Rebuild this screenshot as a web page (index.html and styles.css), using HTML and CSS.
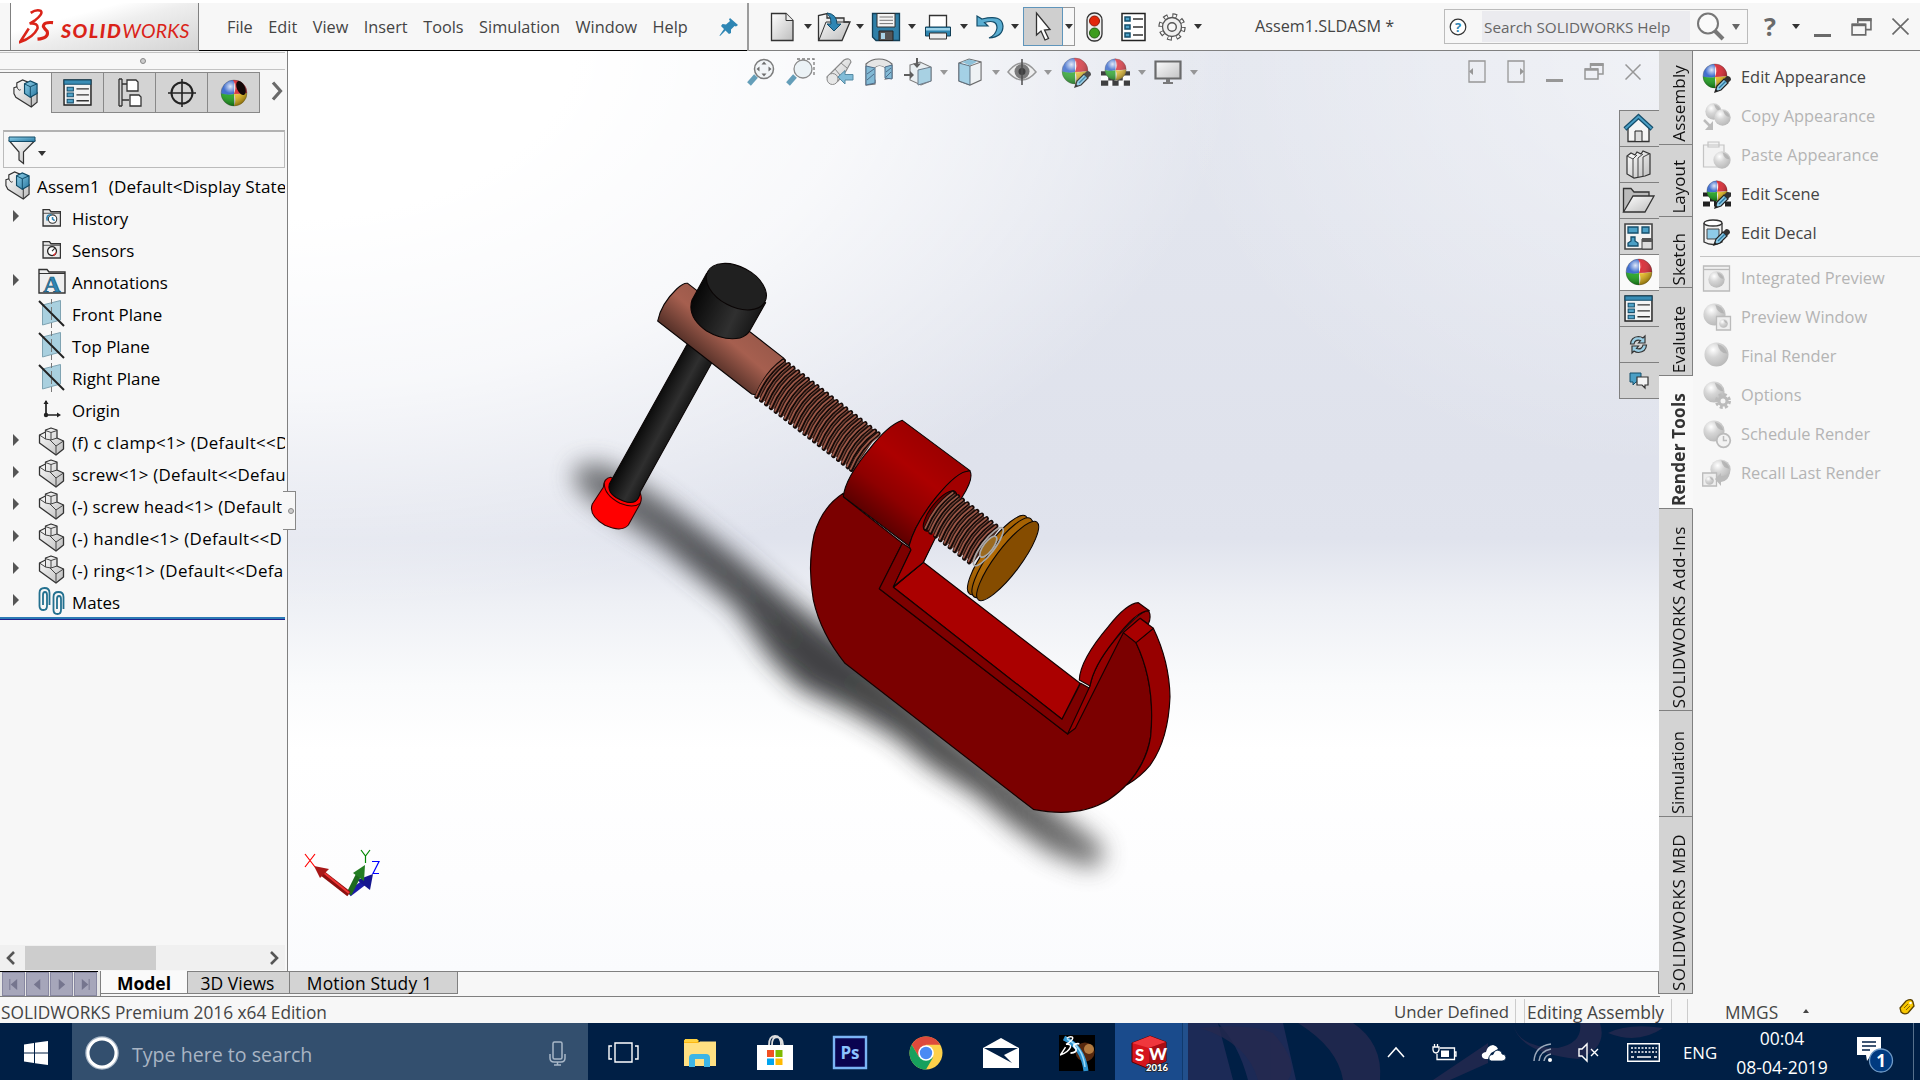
FILE: index.html
```html
<!DOCTYPE html>
<html lang="en">
<head>
<meta charset="utf-8">
<title>Assem1.SLDASM - SOLIDWORKS</title>
<link rel="stylesheet" href="styles.css">
</head>
<body>
<svg class="defs" width="0" height="0" aria-hidden="true">
  <defs>
    <linearGradient id="gBlue" x1="0" y1="0" x2="1" y2="1"><stop offset="0" stop-color="#8fd0ea"/><stop offset="1" stop-color="#2a7aa2"/></linearGradient>
    <linearGradient id="gGrey" x1="0" y1="0" x2="1" y2="1"><stop offset="0" stop-color="#fff"/><stop offset="1" stop-color="#bdbdbd"/></linearGradient>
    <radialGradient id="gShine" cx=".36" cy=".25" r=".75"><stop offset="0" stop-color="#fff" stop-opacity=".85"/><stop offset=".35" stop-color="#fff" stop-opacity=".1"/><stop offset="1" stop-color="#000" stop-opacity=".38"/></radialGradient>
    <radialGradient id="gBall" cx=".36" cy=".3" r=".8"><stop offset="0" stop-color="#fff"/><stop offset=".4" stop-color="#d6d6d6"/><stop offset="1" stop-color="#b4b4b4"/></radialGradient>
    <symbol id="sphere" viewBox="0 0 28 28">
      <path d="M14 14V1A13 13 0 0 0 1.2 15Q8 17 14 15Z" fill="#2c5fc9"/>
      <path d="M13 1A13 13 0 0 1 27 14Q20 15 14 15Q17 8 13 1Z" fill="#d8202a"/>
      <path d="M1 14.5Q8 16.500 14 15V27A13 13 0 0 1 1 14.500Z" fill="#17a317"/>
      <path d="M14 15Q21 15.500 27 14A13 13 0 0 1 14 27Q17 21 14 15Z" fill="#f1c21b"/>
      <circle cx="14" cy="14" r="13" fill="url(#gShine)" stroke="#333" stroke-opacity=".5" stroke-width=".6"/>
    </symbol>
    <symbol id="pencil" viewBox="0 0 18 18">
      <path d="M1 17L3 11L10 4L14 8L7 15Z" fill="#8ecbe8" stroke="#222" stroke-width="1.200"/>
      <path d="M5 13L12 6" stroke="#2a7aa2" stroke-width="1.500"/>
      <path d="M10 4L13 1Q17 1 17 5L14 8Z" fill="#333"/><path d="M1 17l1-3 2 2z" fill="#222"/>
    </symbol>
    <symbol id="checker" viewBox="0 0 28 14">
      <path d="M0 0H28V14H0Z" fill="#fff"/><path d="M0 0H7V4H0ZM21 0H28V4H21ZM7 4H13V9H7ZM16 4H21V9H16ZM0 9H7V14H0ZM11 9H17V14H11ZM22 9H28V14H22Z" fill="#222"/>
    </symbol>
    <symbol id="asm" viewBox="0 0 28 30">
      <path d="M2 9L5 8V4L11 1L16 3L15 7L26 14V24L20 29L4 19L2 15Z" fill="url(#gGrey)" stroke="#333" stroke-width="1.200"/>
      <path d="M20 29V18L26 14M5 8Q7 13 9 11" fill="none" stroke="#333"/>
      <path d="M13 5L19 2L26 5V15L19 19L13 15Z" fill="url(#gBlue)" stroke="#0f4a66" stroke-width="1.200"/><path d="M13 5L19 8L26 5M19 8V19" fill="none" stroke="#0f4a66"/>
    </symbol>
    <symbol id="part" viewBox="0 0 27 29">
      <path d="M1.500 8L7.500 5V3L13 1L19 3V11L25.500 14V22L18 28L1.500 16Z" fill="url(#gGrey)" stroke="#333" stroke-width="1.300" stroke-linejoin="round"/>
      <path d="M7.500 3.500L13 5.500L19 3.500M13 5.500V13L7.500 12V4M1.500 8L7.500 12M13 13L19 11M12 13L18 19L25.500 14M18 19V28" fill="none" stroke="#444"/>
    </symbol>
    <symbol id="plane" viewBox="0 0 27 29">
      <path d="M4.500 6L22.500 1.500V21L4.500 26Z" fill="#a9d0df" stroke="#7fa3b2"/>
      <path d="M13.500 0V29" stroke="#777" stroke-dasharray="5 3"/><path d="M1 2L26 27" stroke="#222" stroke-width="2"/>
    </symbol>
    <symbol id="folder" viewBox="0 0 18 18">
      <path d="M1 4V1.500H7L8.500 3.500H17.500V17H1Z" fill="#e9e9e9" stroke="#333" stroke-width="1.300"/><path d="M1 5H17" stroke="#333" stroke-width=".8"/>
    </symbol>
    <symbol id="list" viewBox="0 0 28 26">
      <path d="M1 1H27V25H1Z" fill="#f4f4f4" stroke="#222" stroke-width="1.400"/><path d="M1 1H27V5H1Z" fill="#3a8db5" stroke="#154e6b"/>
      <path d="M4 8h6v3.500H4zM4 13.500h6V17H4zM4 19.500h6V23H4z" fill="#4fa3c9" stroke="#154e6b"/><path d="M13 9.500H25M13 15.300H25M13 21H25" stroke="#333" stroke-width="1.300"/>
    </symbol>
    <symbol id="restore" viewBox="0 0 20 17"><path d="M6.500 5V1H19V11H14" fill="none" stroke="currentColor" stroke-width="1.500"/><path d="M6 1.500H19.500" stroke="currentColor" stroke-width="3"/><path d="M1 6H14V16H1Z" fill="none" stroke="currentColor" stroke-width="1.500"/><path d="M1 6.500H14" stroke="currentColor" stroke-width="2.500"/></symbol>
    <symbol id="close" viewBox="0 0 16 16"><path d="M.5.500L15.500 15.500M15.500.500L.5 15.500" stroke="currentColor" stroke-width="1.500"/></symbol>
    <symbol id="ball" viewBox="0 0 26 26"><circle cx="13" cy="13" r="12.500" fill="url(#gBall)"/><path d="M14 2Q22 4 24 12Q16 12 14 2Z" fill="#a9a9a9" opacity=".7"/></symbol>
    <symbol id="ds" viewBox="0 0 38 36">
      <path d="M12 4Q18 0 22.500 2Q25 5 16 12L11 15Q20 14 19 20Q15 29 1 34L10 20" fill="none" stroke="currentColor" stroke-width="2.600"/>
      <path d="M35 14Q25 13 25 18Q26 20 29 23Q31 30 19 31" fill="none" stroke="currentColor" stroke-width="3.200"/>
    </symbol>
  </defs>
</svg>

<header class="titlebar">
  <div class="menubar">
    <div class="brand">
      <svg class="brand-mark" viewBox="0 0 38 36"><use href="#ds"/></svg>
      <span class="brand-bold">SOLID</span><span class="brand-light">WORKS</span>
    </div>
    <nav class="menus">
      <span>File</span><span>Edit</span><span>View</span><span>Insert</span><span>Tools</span><span>Simulation</span><span>Window</span><span>Help</span>
    </nav>
    <svg class="pin" viewBox="0 0 20 20"><path d="M11 1L19 8L17 9.500L15.500 9L12 12.500L12 16L10 17L6.500 13.500L1 19L.5 18.500L5 12L2 9L3.500 7L7 7.500L11 4L10 2.500Z" fill="#2e86b4"/></svg>
  </div>
  <div class="tools">
    <svg class="ico" viewBox="0 0 30 30"><path d="M4.500 1.500H19L26 8.500V28.500H4.500Z" fill="url(#gGrey)" stroke="#333" stroke-width="1.300"/><path d="M19 1.500V8.500H26" fill="#eee" stroke="#333"/></svg>
    <i class="caret"></i>
    <svg class="ico wide" viewBox="0 0 34 30"><path d="M1.500 28.500V3.500L10 1.500V6H27V10H33L25 28.500Z" fill="url(#gGrey)" stroke="#333" stroke-width="1.300"/><path d="M2 28L9 10H32" fill="none" stroke="#333"/><path d="M10 1Q20 2 20 12H24L17 19L10 12H14Q15 6 10 1Z" fill="#2e86b4" stroke="#134c69"/></svg>
    <i class="caret"></i>
    <svg class="ico" viewBox="0 0 30 30"><path d="M1.500 1.500H28.500V28.500H5L1.500 25Z" fill="#2f7fa7" stroke="#123f57" stroke-width="1.300"/><path d="M6 1.500H24V15H6Z" fill="#f3f3f3" stroke="#333"/><path d="M8.500 5H22M8.500 8.300H22M8.500 11.600H22" stroke="#777"/><path d="M8 19H22V28.500H8Z" fill="#555" stroke="#222"/><path d="M10 21H14V27H10Z" fill="#aad3e6"/></svg>
    <i class="caret"></i>
    <svg class="ico" viewBox="0 0 30 30"><path d="M6.500 3.500H23.500V16H6.500Z" fill="#fff" stroke="#333" stroke-width="1.300"/><path d="M2.500 15H27.500V24H2.500Z" fill="#2f86b0" stroke="#123f57"/><path d="M3 16H27V18.500H3Z" fill="#9dd3ea"/><path d="M6.500 21H23.500V27H6.500Z" fill="#eee" stroke="#333"/></svg>
    <i class="caret"></i>
    <svg class="ico" viewBox="0 0 30 30"><path d="M2 4V14H13L9.500 10.500Q22 7 22 16Q21 23 14 26Q28 25 28 14Q27 2 7 7Z" fill="#5aaed2" stroke="#134c69" stroke-width="1.200"/></svg>
    <i class="caret last"></i>
    <div class="select-tool"><svg width="16" height="30" viewBox="0 0 16 30"><path d="M1.500 1V23L6 19L10 28L13.500 26.500L9.500 18L15 17.500Z" fill="#fff" stroke="#333" stroke-width="1.300"/></svg></div>
    <div class="select-drop"><i class="caret"></i></div>
    <svg class="traffic" viewBox="0 0 17 30"><rect x="1" y="1" width="15" height="28" rx="7" fill="#eee" stroke="#333" stroke-width="1.300"/><circle cx="8.500" cy="9" r="5" fill="#e32709" stroke="#8c1a08"/><circle cx="8.500" cy="21" r="5" fill="#3c9c1d" stroke="#235d11"/></svg>
    <svg class="optlist" viewBox="0 0 25 30"><path d="M1 1.500H24V28.500H1Z" fill="#fff" stroke="#222" stroke-width="1.500"/><path d="M4 5h5v4H4zM4 13h5v4H4zM4 21h5v4H4z" fill="#4fa3c9" stroke="#154e6b" stroke-width="1.500"/><path d="M12 7H22M12 15H22M12 23H22" stroke="#333" stroke-width="1.400"/></svg>
    <svg class="gear" viewBox="0 0 30 30"><circle cx="15" cy="15" r="11.700" fill="none" stroke="#555" stroke-width="4" stroke-dasharray="4.600 4.590"/><circle cx="15" cy="15" r="11.200" fill="none" stroke="#fafafa" stroke-width="2.600" stroke-dasharray="2.600 6.200" stroke-dashoffset="-1"/><circle cx="15" cy="15" r="9.500" fill="#f0f0f0" stroke="#555" stroke-width="1.300"/><circle cx="15" cy="15" r="4.300" fill="#f7f7f7" stroke="#555" stroke-width="1.400"/></svg>
    <i class="caret"></i>
  </div>
  <div class="doc-title">Assem1.SLDASM *</div>
  <div class="search">
    <svg width="18" height="18" viewBox="0 0 18 18"><circle cx="9" cy="9" r="7.800" fill="#fff" stroke="#333" stroke-width="1.200"/><text x="9" y="13.500" text-anchor="middle" class="help-q">?</text></svg>
    <span class="search-field">Search SOLIDWORKS Help</span>
    <svg width="29" height="29" viewBox="0 0 29 29"><circle cx="12" cy="11.500" r="10" fill="#fafafa" stroke="#777" stroke-width="2"/><path d="M18.500 18.500L27 27" stroke="#777" stroke-width="4"/></svg>
    <i class="caret big"></i>
  </div>
  <div class="win-ctl">
    <b>?</b><i class="caret"></i><span class="min"></span>
    <svg width="21" height="18"><use href="#restore"/></svg><svg width="17" height="17"><use href="#close"/></svg>
  </div>
</header>

<main class="work">
  <div class="left">
    <div class="stage">
      <aside class="panel">
        <div class="grip"><i></i></div>
        <div class="ptabs">
          <div class="ptab on"><svg width="27" height="29"><use href="#asm"/></svg></div>
          <div class="ptab"><svg width="29" height="27"><use href="#list"/></svg></div>
          <div class="ptab"><svg width="25" height="29" viewBox="0 0 25 29"><path d="M2 1V28M5 1V28M2 1H5M2 28H5M5 6H10M5 22H12" fill="none" stroke="#333" stroke-width="1.300"/><path d="M10 2H19L21 4V13H10ZM13 17H22L24 19V28H13Z" fill="#fff" stroke="#333" stroke-width="1.300"/></svg></div>
          <div class="ptab"><svg width="28" height="28" viewBox="0 0 28 28"><circle cx="14" cy="14" r="10.500" fill="none" stroke="#222" stroke-width="2"/><path d="M14 0V28M0 14H28" stroke="#222" stroke-width="1.600"/></svg></div>
          <div class="ptab"><svg width="28" height="28" viewBox="0 0 28 28"><use href="#sphere"/><ellipse cx="21" cy="9" rx="4" ry="7.500" transform="rotate(-25 21 9)" fill="#120808"/></svg></div>
          <svg class="more" width="12" height="20" viewBox="0 0 12 20"><path d="M2 1.500L9.500 10L2 18.500" fill="none" stroke="#6a6a6a" stroke-width="3.200"/></svg>
        </div>
        <div class="filter"><svg width="28" height="28" viewBox="0 0 28 28"><path d="M1.500 5L11 16V24L15.500 27.500V16L26.500 5Z" fill="url(#gGrey)" stroke="#333" stroke-width="1.200"/><path d="M1 1H27V5.500H1Z" fill="url(#gBlue)" stroke="#134c69"/></svg><i class="caret"></i></div>
        <ul class="tree">
          <li class="root"><svg width="27" height="29"><use href="#asm"/></svg>Assem1&nbsp; (Default&lt;Display State</li>
          <li class="exp"><span class="ti"><svg width="19" height="19" viewBox="0 0 18 18"><use href="#folder"/><circle cx="10" cy="10.500" r="4" fill="#fff" stroke="#333"/><path d="M5 12Q3.500 6 9 6.500M10 8.500V10.500L12 12" fill="none" stroke="#2e86b4" stroke-width="1.500"/></svg></span>History</li>
          <li><span class="ti"><svg width="19" height="19" viewBox="0 0 18 18"><use href="#folder"/><circle cx="9.500" cy="10.500" r="4.200" fill="#fff" stroke="#222" stroke-width="1.200"/><path d="M9.500 10.500L12 8" stroke="#222"/><path d="M10 14.500L14 11L12 15Z" fill="#e33"/></svg></span>Sensors</li>
          <li class="exp"><span class="ti"><svg width="28" height="26" viewBox="0 0 28 26"><path d="M1 5V1.500H9L11 4H27V25H1Z" fill="#efefef" stroke="#333" stroke-width="1.400"/><path d="M1 5.500H27" stroke="#333"/><text x="14" y="24" text-anchor="middle" class="anno">A</text></svg></span>Annotations</li>
          <li><span class="ti"><svg width="27" height="29"><use href="#plane"/></svg></span>Front Plane</li>
          <li><span class="ti"><svg width="27" height="29"><use href="#plane"/></svg></span>Top Plane</li>
          <li><span class="ti"><svg width="27" height="29"><use href="#plane"/></svg></span>Right Plane</li>
          <li><span class="ti"><svg width="18" height="18" viewBox="0 0 18 18"><path d="M3 1V15H16" fill="none" stroke="#222" stroke-width="1.700"/><path d="M3 0L5.500 4H.5ZM18 15L14 12.500V17.500Z" fill="#222"/><circle cx="3" cy="15" r="2.200" fill="#222"/></svg></span>Origin</li>
          <li class="exp loose"><span class="ti"><svg width="27" height="29"><use href="#part"/></svg></span>(f) c clamp&lt;1&gt; (Default&lt;&lt;D</li>
          <li class="exp snug"><span class="ti"><svg width="27" height="29"><use href="#part"/></svg></span>screw&lt;1&gt; (Default&lt;&lt;Defau</li>
          <li class="exp tight"><span class="ti"><svg width="27" height="29"><use href="#part"/></svg></span>(-) screw head&lt;1&gt; (Default</li>
          <li class="exp loose"><span class="ti"><svg width="27" height="29"><use href="#part"/></svg></span>(-) handle&lt;1&gt; (Default&lt;&lt;D</li>
          <li class="exp loose"><span class="ti"><svg width="27" height="29"><use href="#part"/></svg></span>(-) ring&lt;1&gt; (Default&lt;&lt;Defa</li>
          <li class="exp"><span class="ti"><svg width="27" height="28" viewBox="0 0 27 28"><g fill="none" stroke="#23708f" stroke-width="1.800"><path d="M9 8V19Q9 23 5.500 23Q1.500 23 1.500 19V6Q1.500 1 6.500 1Q11.500 1 11.500 6V18M5 18V8Q5 5 7 5Q9 5 9 8"/><path d="M23 12V23Q23 27 19.500 27Q15.500 27 15.500 23V10Q15.500 5 20.500 5Q25.500 5 25.500 10V22M19 22V12Q19 9 21 9Q23 9 23 12"/></g></svg></span>Mates</li>
        </ul>
        <div class="rollback"></div>
        <div class="hscroll"><svg width="10" height="14" viewBox="0 0 10 14"><path d="M8 1L2 7L8 13" fill="none" stroke="#555" stroke-width="2.600"/></svg><div class="thumb"></div><svg class="r" width="10" height="14" viewBox="0 0 10 14"><path d="M2 1L8 7L2 13" fill="none" stroke="#555" stroke-width="2.600"/></svg></div>
      </aside>
      <section class="viewport">
        <svg class="model" viewBox="288 51 1371 920" width="1371" height="920">
          <defs>
            <filter id="soft" x="-20%" y="-20%" width="140%" height="140%"><feGaussianBlur stdDeviation="12"/></filter>
            <linearGradient id="mShade" gradientUnits="userSpaceOnUse" x1="580" y1="480" x2="1100" y2="870"><stop offset="0" stop-color="#66686b"/><stop offset=".2" stop-color="#444548"/><stop offset=".45" stop-color="#2c2d2f"/><stop offset=".8" stop-color="#3c3c3c"/><stop offset="1" stop-color="#6a6a6a"/></linearGradient>
            <linearGradient id="mRod" gradientUnits="userSpaceOnUse" x1="265" y1="500" x2="350" y2="545"><stop offset="0" stop-color="#050505"/><stop offset=".7" stop-color="#2f2f2f"/><stop offset="1" stop-color="#1c1c1c"/></linearGradient>
            <linearGradient id="mKnob" gradientUnits="userSpaceOnUse" x1="400" y1="170" x2="590" y2="255"><stop offset="0" stop-color="#060606"/><stop offset=".65" stop-color="#303030"/><stop offset="1" stop-color="#151515"/></linearGradient>
            <linearGradient id="mPink" gradientUnits="userSpaceOnUse" x1="530" y1="245" x2="437" y2="355"><stop offset="0" stop-color="#9c5a4b"/><stop offset=".4" stop-color="#a65f4f"/><stop offset="1" stop-color="#5b342b"/></linearGradient>
            <linearGradient id="mRed" gradientUnits="userSpaceOnUse" x1="1130" y1="615" x2="950" y2="845"><stop offset="0" stop-color="#9c0000"/><stop offset=".35" stop-color="#ac0000"/><stop offset=".7" stop-color="#8e0000"/><stop offset="1" stop-color="#5c0000"/></linearGradient>
            <linearGradient id="mGold" gradientUnits="userSpaceOnUse" x1="1400" y1="830" x2="1240" y2="1060"><stop offset="0" stop-color="#9a5a00"/><stop offset=".5" stop-color="#b46c06"/><stop offset="1" stop-color="#7a4700"/></linearGradient>
            <g id="turn"><path d="M590 470Q618 400 671 362" stroke="#150a08" stroke-width="14" stroke-linecap="round" fill="none"/><path d="M588 468Q616 400 670 362" stroke="#9a5747" stroke-width="5.400" stroke-linecap="round" fill="none"/><path d="M596 474Q624 405 676 367" stroke="#834a3c" stroke-width="3" fill="none"/></g>
            <g id="turn2"><use href="#turn"/><use href="#turn" x="14.400" y="11.100"/></g>
            <g id="turn4"><use href="#turn2"/><use href="#turn2" x="28.800" y="22.200"/></g>
            <g id="turn8"><use href="#turn4"/><use href="#turn4" x="57.600" y="44.400"/></g>
          </defs>
          <path filter="url(#soft)" opacity=".9" fill="url(#mShade)" d="M574 470Q588 456 618 470L670 505L740 559L800 608L870 660L960 740L1098 842Q1112 862 1090 868L1050 853L1010 824L978 796L930 766L895 737L850 711L800 688L772 660L735 607L660 545L600 506Q570 488 574 470Z"/>
          <g transform="translate(780 400) scale(.33333)" stroke="#180000" stroke-width="3.500" stroke-linejoin="round">
            <path fill="#aa0000" d="M340 562L430 487L900 850L846 958Z"/>
            <path fill="#930000" d="M394 447L388 400L470 400L430 487L340 562Z"/>
            <path fill="#7b0000" d="M190 280Q125 322 102 405Q82 500 100 600Q122 700 195 790L760 1228Q895 1255 985 1200Q1090 1130 1112 1010Q1127 850 1068 728L1030 698L930 865L863 1002L298 566L367 430L192 292Z"/>
            <path fill="#7d0000" d="M298 566L367 430L394 447L340 562L846 958L902 850L932 866L863 1002Z"/>
            <path fill="#970000" d="M1068 728L1120 685Q1168 785 1170 890Q1165 1020 1110 1096Q1082 1130 1040 1155Q1100 1090 1112 1010Q1127 850 1068 728Z"/>
            <path fill="#940000" d="M930 858Q940 800 1000 725Q1080 630 1106 632Q1115 650 1105 672L1080 655L1030 698L886 985L863 1002Z"/>
            <path fill="#a30000" d="M1075 608Q1040 610 985 680Q900 780 898 840L930 858Q940 800 1000 725Q1070 630 1108 632Z"/>
            <path fill="#a80000" d="M1030 698L1080 655L1120 685L1068 728Z"/>
          </g>
          <g transform="translate(560 240) scale(.33333)" stroke="#0a0505" stroke-width="3.200" stroke-linejoin="round">
            <path fill="#f00" stroke="#300" d="M152 712Q132 714 130 742L97 792Q84 825 135 856Q185 878 205 855L240 792Q248 775 240 758Z"/>
            <path fill="none" stroke="#300" d="M133 730Q132 765 180 790Q220 806 240 790"/>
            <path fill="url(#mRod)" d="M383 310L460 360L241 755Q235 800 190 783Q140 765 148 732Z"/>
            <path fill="url(#mPink)" d="M383 130L672 355Q640 375 600 467L575 462L293 243Q303 192 350 147Q370 128 383 130Z"/>
            <path fill="#452820" stroke="none" d="M592 466Q620 400 672 362L955 580L880 690Z"/>
            <g><use href="#turn8"/><use href="#turn8" x="115.200" y="88.800"/><use href="#turn4" x="230.400" y="177.600"/><use href="#turn" x="284" y="219"/></g>
            <path fill="url(#mKnob)" d="M440 100L396 180Q380 230 440 273Q490 303 540 294Q562 288 572 268L617 188Z"/>
            <ellipse cx="529" cy="140" rx="97" ry="60" transform="rotate(28 529 140)" fill="#202020"/>
            <path fill="url(#mRed)" d="M1027 541Q985 555 930 625Q855 715 850 770L1047 918Q1065 850 1130 770Q1190 697 1230 692Z"/>
            <path fill="#a20000" d="M1047 918Q1065 850 1130 770Q1195 690 1230 693Q1242 715 1207 770L1128 890L1090 967L1000 1040L1053 930Z"/>
            <ellipse cx="1140" cy="813" rx="74" ry="27" transform="rotate(-52 1140 813)" fill="#600"/>
            <path fill="#452820" stroke="none" d="M1100 862Q1128 796 1180 758L1318 866L1240 968Z"/>
            <g transform="translate(508 396)"><use href="#turn8"/><use href="#turn2" x="115" y="88.800"/></g>
            <g fill="url(#mGold)"><ellipse cx="1313" cy="945" rx="144" ry="40" transform="rotate(-54 1313 945)"/><ellipse cx="1327" cy="953" rx="145" ry="40" transform="rotate(-54 1327 953)"/></g>
            <ellipse cx="1343" cy="963" rx="146" ry="38" transform="rotate(-53 1343 963)" fill="#854c00"/>
            <g fill="none" stroke="#a9a9a9" stroke-width="5"><ellipse cx="1285" cy="920" rx="70" ry="19" transform="rotate(-53 1285 920)"/><ellipse cx="1285" cy="920" rx="38" ry="14" transform="rotate(-53 1285 920)" fill="#9a6a20"/></g>
          </g>
          <g>
            <path d="M349 894L366 881" stroke="#1c1ca8" stroke-width="5.500"/><path d="M373 874L357 880L370 890Z" fill="#15158f"/>
            <path d="M349 894L359 874" stroke="#1d6b1d" stroke-width="5.500"/><path d="M365 865L353 873L364 881Z" fill="#237d23"/>
            <path d="M349 894L322 873" stroke="#8c1010" stroke-width="5.500"/><path d="M349 893L323 872" stroke="#e33" stroke-width="2"/><path d="M314 866L329 869L320 878Z" fill="#a81818"/>
            <g fill="none" stroke-width="1.200"><path d="M305 854L315 867M315 854L305 867" stroke="#f00"/><path d="M361 850L365.500 856L370 850M365.500 856V863" stroke="#080"/><path d="M372 861.500H379L373 873.500H379" stroke="#00f"/></g>
          </g>
        </svg>
        <div class="headsup">
          <span><svg width="28" height="28" viewBox="0 0 28 28"><path d="M1 26L8 18" stroke="#4b8fae" stroke-width="5"/><circle cx="16" cy="11" r="9.500" fill="#f1f5f7" stroke="#666" stroke-width="1.500"/><path d="M16 3.500L13.500 6.500H18.500ZM16 18.500L13.500 15.500H18.500ZM8.500 11L11.500 8.500V13.500ZM23.500 11L20.500 8.500V13.500Z" fill="#555"/></svg></span>
          <span><svg width="28" height="28" viewBox="0 0 28 28"><path d="M10 1H27V18" fill="none" stroke="#666" stroke-width="1.300" stroke-dasharray="3 2"/><path d="M1 26L8 18" stroke="#4b8fae" stroke-width="5"/><circle cx="16" cy="11" r="9" fill="#e9f1f5" stroke="#777" stroke-width="1.300"/></svg></span>
          <span><svg width="28" height="28" viewBox="0 0 28 28"><path d="M1 19L9 11L18 2Q24-1 25 4L20 13L12 23Q5 29 1 19Z" fill="url(#gGrey)" stroke="#777" stroke-width="1.200"/><path d="M9 11L14 17M15 5L21 10" stroke="#777"/><circle cx="6.500" cy="21" r="5.500" fill="#e4e4e4" stroke="#777"/><path d="M12 19L19 12.500V16.500H27V22H19V26Z" fill="#6cb2d2" stroke="#3a7896"/></svg></span>
          <span><svg width="28" height="28" viewBox="0 0 28 28"><path d="M1 6Q6 1 14 1Q22 1 27 6V20L20 21V10Q14 6 10 10V26L1 27Z" fill="#e2e2e2" stroke="#555" stroke-width="1.200"/><path d="M10 10Q14 6 20 10V21Q15 18 10 22Z" fill="#f6f6f6"/><path d="M1 8L10 10V25L1 27ZM20 9L27 7V21L20 20Z" fill="#6fb0cf" stroke="#357"/><path d="M2 16L9 11M2 22L9 16M21 14L26 10M21 19L26 14" stroke="#357"/></svg></span>
          <span><svg width="28" height="28" viewBox="0 0 28 28"><path d="M6 7L16 4L27 9V23L17 27L6 22Z" fill="#e8eef1" stroke="#666" stroke-width="1.100"/><path d="M14 12L27 9V23L14 27Z" fill="#9bcbe0" stroke="#567"/><path d="M13 0V7M0 17H7" stroke="#444" stroke-width="2"/><path d="M9 5.500H17L13 10ZM6 13V21L10 17Z" fill="#444"/></svg></span><i class="caret"></i>
          <span><svg width="24" height="28" viewBox="1 0 26 28" preserveAspectRatio="none"><path d="M2 5L13 1L26 4V22L14 27L2 23Z" fill="#eef2f4" stroke="#555" stroke-width="1.200"/><path d="M2 5L14 8V27L2 23Z" fill="#97cbe2" stroke="#456"/><path d="M5 4L13 1.500L22 3.500L14 7.500Z" fill="#7db9d3"/><path d="M14 8L26 4" stroke="#555"/></svg></span><i class="caret"></i>
          <span><svg width="30" height="26" viewBox="0 0 30 26"><path d="M1 13Q15-5 29 13Q15 29 1 13Z" fill="#eee" stroke="#888" stroke-width="1.500"/><circle cx="15" cy="12.500" r="7.500" fill="#666"/><circle cx="15" cy="12.500" r="3.500" fill="#222"/><path d="M15 0V26" stroke="#333" stroke-width="1.500"/></svg></span><i class="caret"></i>
          <span class="push"><svg width="31" height="31" viewBox="0 0 31 31"><use href="#sphere" width="28" height="28"/><use href="#pencil" x="13" y="13" width="18" height="18"/></svg></span>
          <span><svg width="29" height="29" viewBox="0 0 29 29"><use href="#checker" y="12" width="29" height="17" preserveAspectRatio="none"/><use href="#sphere" x="3" width="23" height="23"/></svg></span><i class="caret"></i>
          <span><svg width="28" height="24" viewBox="0 0 28 24"><path d="M1.500 1.500H26.500V18.500H1.500Z" fill="url(#gGrey)" stroke="#555" stroke-width="2.200"/><path d="M12 19H16V22H19V24H9V22H12Z" fill="#666"/></svg></span><i class="caret"></i>
        </div>
        <div class="doc-ctl">
          <svg width="18" height="23" viewBox="0 0 18 23"><path d="M1 1H17V22H1Z" fill="none" stroke="currentColor" stroke-width="1.300"/><path d="M1 11.500L5 8V15Z" fill="currentColor"/></svg>
          <svg width="18" height="23" viewBox="0 0 18 23"><path d="M1 1H17V22H1Z" fill="none" stroke="currentColor" stroke-width="1.300"/><path d="M17 11.500L13 8V15Z" fill="currentColor"/></svg>
          <span class="min"></span>
          <svg width="20" height="17"><use href="#restore"/></svg><svg width="16" height="16"><use href="#close"/></svg>
        </div>
        <div class="taskpane">
          <span><svg width="29" height="29" viewBox="0 0 29 29"><path d="M4 13V27.500H25V13L14.500 4Z" fill="#f6f6f6" stroke="#333" stroke-width="1.300"/><path d="M11 27V17H18V27" fill="#ddd" stroke="#222"/><path d="M1 15L14.500 2.500L28 15" fill="none" stroke="#154e6b" stroke-width="4.500"/><path d="M1.500 14.500L14.500 2.500L27.500 14.500" fill="none" stroke="#4b9fc5" stroke-width="2"/></svg></span>
          <span><svg width="25" height="29" viewBox="0 0 25 29"><path d="M1 6L5 3L9 5L11 2L15 4L17 1L24 4V24L19 26L8 28L1 24Z" fill="url(#gGrey)" stroke="#333" stroke-width="1.200"/><path d="M1 6L7 9V28M7 9L11 5M12 8V27M12 8L17 4M17 7V26M17 7L23 4" fill="none" stroke="#444"/></svg></span>
          <span><svg width="33" height="26" viewBox="0 0 33 26"><path d="M1.500 25V1.500H9L12 5H27V9" fill="#bbb" stroke="#333" stroke-width="1.300"/><path d="M1.500 25L11 9H32L23 25Z" fill="url(#gGrey)" stroke="#333" stroke-width="1.300"/></svg></span>
          <span><svg width="29" height="27" viewBox="0 0 29 27"><path d="M1 1H28V26H1Z" fill="#f2f2f2" stroke="#444" stroke-width="1.600"/><path d="M4 4H14V10H4ZM18 4H25V10H18ZM7 14H11V18L14 20V23H4V20L7 18Z" fill="#4b9fc5" stroke="#154e6b" stroke-width="1.300"/><path d="M18 16H28V26H18Z" fill="#ddd" stroke="#444"/><path d="M18 15H28V19H18Z" fill="#555"/></svg></span>
          <span class="on"><svg width="28" height="28"><use href="#sphere"/></svg></span>
          <span><svg width="29" height="27"><use href="#list"/></svg></span>
          <span><svg width="19" height="19" viewBox="0 0 19 19"><path d="M1.500 9Q2 2 9.500 1.500Q12 1.500 14 3L16 1V8H9.500L11.500 5.500Q6 4 5 9ZM17.500 10Q17 17 9.500 17.500Q7 17.500 5 16L3 18V11H9.500L7.500 13.500Q13 15 14 10Z" fill="#9acde3" stroke="#333" stroke-width="1.200"/></svg></span>
          <span><svg width="20" height="17" viewBox="0 0 20 17"><path d="M1 1H12V10H7L4 13V10H1Z" fill="#4b9fc5" stroke="#154e6b"/><path d="M8 5H19V13H16V16L13 13H8Z" fill="#f4f4f4" stroke="#333" stroke-width="1.200"/></svg></span>
        </div>
        <div class="splitter"><i></i></div>
      </section>
    </div>
    <div class="sheets">
      <div class="nav"><i><svg viewBox="0 0 12 14"><path d="M2 1V13" stroke="currentColor"/><path d="M10 1V13L3 7Z" fill="currentColor"/></svg></i><i><svg viewBox="0 0 12 14"><path d="M9 1V13L2 7Z" fill="currentColor"/></svg></i><i><svg viewBox="0 0 12 14"><path d="M3 1V13L10 7Z" fill="currentColor"/></svg></i><i><svg viewBox="0 0 12 14"><path d="M10 1V13" stroke="currentColor"/><path d="M2 1V13L9 7Z" fill="currentColor"/></svg></i></div>
      <div class="sheet on">Model</div><div class="sheet views">3D Views</div><div class="sheet motion">Motion Study 1</div>
    </div>
  </div>
  <nav class="vtabs">
    <div class="vt assembly"><span>Assembly</span></div><div class="vt layout"><span>Layout</span></div><div class="vt sketch"><span>Sketch</span></div><div class="vt evaluate"><span>Evaluate</span></div><div class="vt render"><span>Render Tools</span></div><div class="vt addins"><span>SOLIDWORKS Add-Ins</span></div><div class="vt sim"><span>Simulation</span></div><div class="vt mbd"><span>SOLIDWORKS MBD</span></div>
  </nav>
  <aside class="commands">
    <div class="cmd"><svg viewBox="0 0 30 30"><use href="#sphere" x="0" width="26" height="26"/><use href="#pencil" x="12" y="12" width="18" height="18"/></svg>Edit Appearance</div>
    <div class="cmd off"><svg viewBox="0 0 30 30"><use href="#ball" x="3" y="1" width="17" height="17"/><use href="#ball" x="12" y="7" width="17" height="17"/><path d="M2 18L9 25" stroke="#bbb" stroke-width="2.500"/><path d="M11 19V28H3Z" fill="#bbb"/></svg>Copy Appearance</div>
    <div class="cmd off"><svg viewBox="0 0 30 30"><path d="M1.500 4H22V26H1.500ZM6 1H17V6H6Z" fill="#f2f2f2" stroke="#c4c4c4" stroke-width="1.200"/><use href="#ball" x="11" y="10" width="18" height="18"/></svg>Paste Appearance</div>
    <div class="cmd"><svg viewBox="0 0 30 30"><use href="#checker" x="1" y="11" width="28" height="17" preserveAspectRatio="none"/><use href="#sphere" x="4" y="0" width="22" height="22"/><use href="#pencil" x="12" y="11" width="18" height="18"/></svg>Edit Scene</div>
    <div class="cmd"><svg viewBox="0 0 30 30"><path d="M2 4V23Q11 28 20 23V4" fill="#f2f2f2" stroke="#333" stroke-width="1.300"/><ellipse cx="11" cy="4" rx="9" ry="3" fill="#fff" stroke="#333" stroke-width="1.300"/><path d="M5 10H17V20H5Z" fill="#8ecbe8" stroke="#444"/><use href="#pencil" x="11" y="9" width="18" height="18"/></svg>Edit Decal</div>
    <hr>
    <div class="cmd off"><svg viewBox="0 0 30 30"><path d="M1.500 2H27.500V27H1.500Z" fill="#efefef" stroke="#bbb" stroke-width="1.300"/><path d="M1.500 5.500H27.500" stroke="#bbb" stroke-width="1.300"/><use href="#ball" x="6" y="7" width="17" height="17"/></svg>Integrated Preview</div>
    <div class="cmd off"><svg viewBox="0 0 30 30"><use href="#ball" x="1" y="0" width="23" height="23"/><path d="M14.500 13.500H28.500V27H14.500Z" fill="#eee" stroke="#bbb" stroke-width="1.300"/><use href="#ball" x="17" y="16" width="9" height="9"/></svg>Preview Window</div>
    <div class="cmd off"><svg viewBox="0 0 30 30"><use href="#ball" x="2" y="0" width="25" height="25"/></svg>Final Render</div>
    <div class="cmd off"><svg viewBox="0 0 30 30"><use href="#ball" x="1" y="0" width="22" height="22"/><circle cx="21" cy="20" r="6.500" fill="none" stroke="#bbb" stroke-width="3" stroke-dasharray="3 2.100"/><circle cx="21" cy="20" r="4" fill="#f4f4f4" stroke="#bbb" stroke-width="3"/></svg>Options</div>
    <div class="cmd off"><svg viewBox="0 0 30 30"><use href="#ball" x="1" y="0" width="22" height="22"/><circle cx="21.500" cy="20.500" r="6.800" fill="#f2f2f2" stroke="#bbb" stroke-width="1.800"/><path d="M21.500 16V20.500H25" fill="none" stroke="#bbb" stroke-width="1.500"/></svg>Schedule Render</div>
    <div class="cmd off"><svg viewBox="0 0 30 30"><use href="#ball" x="8" y="0" width="21" height="21"/><path d="M.7 14H14.500V27H.7Z" fill="#eee" stroke="#bbb" stroke-width="1.300"/><use href="#ball" x="3" y="17" width="9" height="9"/><path d="M13 20L19 14V17Q25 17 28 13Q27 22 19 23V27Z" fill="#bbb"/></svg>Recall Last Render</div>
  </aside>
</main>

<footer class="status">
  <span class="edition">SOLIDWORKS Premium 2016 x64 Edition</span>
  <span class="cell defined">Under Defined</span><span class="cell gap"></span><span class="cell editing">Editing Assembly</span><span class="cell gap2"></span><span class="units">MMGS</span><i class="up"></i>
  <svg class="tag" width="16" height="16" viewBox="0 0 16 16"><path d="M1 9L7 2Q13-1 14 3L15 7L9 14Q5 16 2 13Z" fill="#f7c600" stroke="#5c4300" stroke-width="1.300"/><path d="M5 9L9 5M7 11L11 7" stroke="#8a6500"/><circle cx="11.500" cy="4" r="1.300" fill="#fff"/></svg>
</footer>

<div class="taskbar">
  <div class="start"><svg width="24" height="24" viewBox="0 0 24 24"><path d="M0 3.500L10 2V11.500H0ZM11 1.800L24 0V11.500H11ZM0 12.500H10V22L0 20.500ZM11 12.500H24V24L11 22.200Z" fill="#fff"/></svg></div>
  <div class="cortana"><svg width="34" height="34" viewBox="0 0 34 34"><circle cx="17" cy="17" r="15" fill="none" stroke="#a8b6c6" stroke-width="3.500"/><circle cx="17" cy="17" r="14" fill="none" stroke="#fff" stroke-width="3"/></svg><span>Type here to search</span>
    <svg class="mic" width="17" height="25" viewBox="0 0 17 25"><rect x="4" y="1" width="9" height="17" rx="1.500" fill="none" stroke="#a9b8c8" stroke-width="1.500"/><path d="M1 13V17Q1 21 5 21H12Q16 21 16 17V13M8.500 21V24M5 24H12" fill="none" stroke="#a9b8c8" stroke-width="1.500"/></svg></div>
  <div class="apps">
    <span><svg width="31" height="21" viewBox="0 0 31 21"><path d="M7 1H24V20H7ZM4 4H1V17H4M27 4H30V17H27" fill="none" stroke="#fff" stroke-width="1.400"/></svg></span>
    <span class="explorer"><svg width="33" height="28" viewBox="0 0 33 28"><path d="M0 1H14L15 4H0Z" fill="#fdb813"/><path d="M0 4H14L16 2.500H32V27H0Z" fill="#ffe082"/><path d="M0 3H13L15 1H14L13 0H1Z" fill="#ffd23f"/><path d="M5 28V19Q5 15 9 15H22Q26 15 26 19V28H20V20H11V28Z" fill="#3db5e6"/></svg></span>
    <span><svg width="36" height="36" viewBox="0 0 36 36"><path d="M12 10Q12 1 18 1Q24 1 24 10M15 10Q15 2 20 2Q26 3 26 10" fill="none" stroke="#ddd" stroke-width="1.800"/><path d="M0 10H36V35H0Z" fill="#fff"/><path d="M10 15H17V22H10Z" fill="#f25022"/><path d="M18.500 15H25.500V22H18.500Z" fill="#7fba00"/><path d="M10 23.500H17V30H10Z" fill="#00a4ef"/><path d="M18.500 23.500H25.500V30H18.500Z" fill="#ffb900"/></svg></span>
    <span><svg width="34" height="33" viewBox="0 0 34 33"><path d="M1 1H33V32H1Z" fill="#0a0450" stroke="#7ab4f5" stroke-width="2.400"/><text x="17" y="23" text-anchor="middle" class="ps">Ps</text></svg></span>
    <span><svg width="34" height="34" viewBox="0 0 34 34"><circle cx="17" cy="17" r="16.500" fill="#fdd04a"/><path d="M2.700 8.800A16.500 16.500 0 0 1 31.300 8.800H17L10 21Z" fill="#de4a3c"/><path d="M2.700 8.800A16.500 16.500 0 0 0 17 33.500L24 21.500L10 21Z" fill="#17a05d"/><circle cx="17" cy="17" r="7.800" fill="#fff"/><circle cx="17" cy="17" r="6.200" fill="#4a8af4"/></svg></span>
    <span><svg width="36" height="30" viewBox="0 0 36 30"><path d="M0 10L18 0L36 10V30H0Z" fill="#fff"/><path d="M1 10H35L21 17L29 25Z" fill="#001f45"/></svg></span>
    <span><svg class="tds" width="36" height="36" viewBox="0 0 36 36"><path d="M0 0H36V36H0Z" fill="#000"/><circle cx="26" cy="17" r="9.500" fill="#6c3212" opacity=".8"/><circle cx="30" cy="14" r="5" fill="#f0b060" opacity=".6"/><path d="M5 3Q24 12 27 36" fill="none" stroke="#2d93d0" stroke-width="5"/><path d="M8 4Q24 12 26 32" fill="none" stroke="#9fdcf8" stroke-width="1.500"/><use href="#ds" x="1" y="1" width="21" height="20"/></svg></span>
    <span class="active"><svg width="36" height="36" viewBox="0 0 36 36"><path d="M1 8L19 1L35 7V26L18 34L1 27Z" fill="#d5141c" stroke="#5b0000"/><path d="M1 8L19 1L35 7L18 13Z" fill="#f0373d"/><path d="M18 13L35 7V26L18 34Z" fill="#a80e15"/><text x="4" y="26" class="sw">S</text><text x="18" y="25" class="sw">W</text><text x="15" y="35.500" class="yr">2016</text></svg></span>
  </div>
  <div class="wall"><svg width="732" height="57" viewBox="0 0 732 57"><path d="M0 0H95L108 57H60Q50 20 30 0L45 57H0Z" fill="#1c2a56"/><g fill="#26294f" opacity=".8"><path d="M12 5Q60 0 85 10Q112 40 100 57H70Q60 20 12 5Z"/><path d="M110 0H165Q195 20 192 57H155Q150 25 110 0Z"/><path d="M262 0H325Q330 30 390 36Q420 25 412 0H392Q395 20 370 25Q330 25 325 0ZM300 20L245 57H262L300 40ZM420 10Q440 0 475 5Q450 22 420 10Z"/></g></svg></div>
  <div class="tray">
    <svg class="t1" width="18" height="11" viewBox="0 0 18 11"><path d="M1 10L9 1L17 10" fill="none" stroke="#fff" stroke-width="1.500"/></svg>
    <svg class="t2" width="25" height="17" viewBox="0 0 25 17"><path d="M8 4H22.500V15.500H5V10M22.500 8H24V12H22.500" fill="none" stroke="#fff" stroke-width="1.300"/><path d="M9 6.500H17V13H9Z" fill="#fff"/><path d="M1 3H7V6Q6 9 4 9Q1.500 9 1 6ZM2.500 0V3M5.500 0V3" fill="#001f45" stroke="#fff" stroke-width="1.300"/></svg>
    <svg class="t3" width="25" height="16" viewBox="0 0 25 16"><path d="M4 14Q0 13 1 9Q3 7 5 7Q6 1 12 0Q16 1 17 4L10 8L7 14Z" fill="#fff"/><path d="M10 16Q7 15 8 11.500Q10 9 12 9.500Q14 4 18 5.500Q21 6 21 9Q25 9 25 13Q24 16 21 16Z" fill="#fff" stroke="#001f45" stroke-width=".8"/></svg>
    <svg class="t4" width="19" height="19" viewBox="0 0 19 19"><g fill="none" stroke="#9aa8ba" stroke-width="1.500"><path d="M1 18Q2 3 18 1M6 18Q7 8 18 6M11 18Q12 12 18 11"/></g><circle cx="17" cy="17" r="2" fill="#fff"/></svg>
    <svg class="t5" width="21" height="19" viewBox="0 0 21 19"><path d="M1 6H4L9 1V18L4 13H1ZM13 6L20 13M20 6L13 13" fill="none" stroke="#fff" stroke-width="1.400"/></svg>
    <svg class="t6" width="33" height="19" viewBox="0 0 33 19"><path d="M.7.700H32.300V18.300H.7Z" fill="none" stroke="#fff" stroke-width="1.400"/><path d="M4 5H30M4 9H30" stroke="#fff" stroke-width="1.500" stroke-dasharray="2 1.500"/><path d="M4 14H7M10 14H24M27 14H30" stroke="#fff" stroke-width="1.500"/></svg>
    <span class="lang">ENG</span>
    <div class="clock"><span>00:04</span><span>08-04-2019</span></div>
    <svg class="note" width="38" height="38" viewBox="0 0 38 38"><path d="M0 2H24V20H14L10 26L9 20H0Z" fill="#fff"/><path d="M5 7H19M5 11H19M5 15H13" stroke="#001f45" stroke-width="1.300"/><circle cx="24" cy="25.500" r="11.500" fill="#003a80" stroke="#6f9ac6" stroke-width="1.300"/><text x="24" y="31.500" text-anchor="middle" class="badge">1</text></svg>
  </div>
</div>
</body>
</html>
```

FILE: styles.css
```css
* { box-sizing: border-box; }
body {
  margin: 0;
  width: 1920px;
  height: 1080px;
  overflow: hidden;
  display: flex;
  flex-direction: column;
  background: #f7f7f7;
  color: #444;
  font-family: "Open Sans", "Noto Sans", sans-serif;
  font-size: 17px;
  line-height: 1;
  white-space: nowrap;
}
svg { flex: none; display: block; overflow: visible; }
.defs { position: absolute; }

.caret {
  flex: none;
  border: 4px solid transparent;
  border-top: 5px solid #333;
  border-bottom: 0;
}

/* title bar */
.titlebar {
  height: 51px;
  flex: none;
  display: flex;
  border-top: 3px solid #fff;
  border-bottom: 1px solid #808080;
}
.titlebar > div { flex: none; }
.menubar {
  width: 749px;
  height: 48px;
  padding-left: 10px;
  display: flex;
  align-items: center;
  border-right: 2px solid #9c9c9c;
  background: linear-gradient(#000, #000) 199px 47px / 550px 1px no-repeat;
}
.brand {
  width: 189px;
  flex: none;
  height: 48px;
  padding-left: 8px;
  display: flex;
  align-items: center;
  border: solid #808080;
  border-width: 0 1px 1px;
  background: linear-gradient(165deg, #fff 30%, #eee 50%, #d4d4d4);
  color: #da2318;
  font-family: Lato, sans-serif;
  font-style: italic;
  font-size: 19.500px;
}
.brand-mark { width: 37px; height: 35px; margin-right: 5px; }
.brand span { padding-top: 9px; }
.brand-bold { font-weight: 900; letter-spacing: 1.500px; }
.brand-light { font-weight: 400; letter-spacing: .2px; }
.menus { display: flex; gap: 15.500px; padding: 1px 0 0 28px; font-size: 16.300px; }
.pin { width: 20px; height: 20px; margin-left: 31px; }
.tools { display: flex; align-items: center; width: 474px; padding-left: 18px; }
.ico { width: 30px; height: 30px; }
.ico.wide { width: 34px; margin: 0 -2px; }
.tools > .caret { margin: 0 7px; }
.tools > .caret.last { margin: 0 4px 0 6px; }
.select-tool { width: 40px; height: 39px; border: 1px solid #5f95bb; background: #cfcfcf; display: flex; align-items: center; justify-content: center; }
.select-drop { width: 12px; height: 39px; border: 1px solid #999; border-left: 0; display: flex; align-items: center; justify-content: center; }
.traffic { width: 17px; height: 30px; margin: 0 18px 0 11px; }
.optlist { width: 25px; height: 30px; margin-right: 11px; }
.gear { width: 30px; height: 30px; }
.tools > .gear + .caret { margin: 0 0 0 7px; }
.doc-title { width: 221px; padding: 15px 0 0 32px; font-size: 16.200px; }
.search {
  width: 304px;
  height: 35px;
  margin-top: 6px;
  padding-left: 4px;
  border: 1px solid #bbb;
  display: flex;
  align-items: center;
}
.help-q { font: 700 13px "Open Sans", sans-serif; fill: #2e86b4; }
.search-field {
  width: 208px;
  height: 31px;
  flex: none;
  margin: 0 6px 0 15px;
  padding: 9px 0 0 2px;
  background: #ebebef;
  font-size: 15.300px;
  color: #666;
}
.caret.big { border-width: 5px 4.500px 0; border-top-width: 6px; border-top-color: #666; margin-left: 7px; }
.win-ctl { display: flex; align-items: center; color: #6a6a6a; padding-left: 16px; }
.win-ctl b { font-size: 25px; width: 16px; }
.win-ctl .caret { margin: 0 14px 0 12px; }
.min { width: 17px; height: 3px; background: currentColor; }
.win-ctl .min { margin: 18px 20px 0 0; }
.win-ctl svg { margin-right: 20px; }

/* work area */
.work { height: 945px; flex: none; display: flex; }
.left { width: 1659px; display: flex; flex-direction: column; }
.stage { height: 920px; display: flex; }
.panel { width: 288px; border-right: 1px solid #808080; display: flex; flex-direction: column; color: #000; }
.grip {
  width: 285px;
  height: 18px;
  margin-top: 1px;
  border: solid #c3c3c3;
  border-width: 1px 0;
  display: flex;
  align-items: center;
  justify-content: center;
}
.grip i, .splitter i { width: 6px; height: 6px; border-radius: 50%; background: #ccc; border: 1px solid #888; }
.ptabs { height: 41px; margin-top: 2px; display: flex; align-items: center; }
.ptab { width: 52px; height: 41px; border: 1px solid #888; border-left: 0; background: #d3d3d3; display: flex; align-items: center; justify-content: center; }
.ptab.on { background: #f7f7f7; border-bottom: 0; padding-right: 0; }
.more { margin: -3px 0 0 11px; }
.filter {
  width: 282px;
  height: 38px;
  margin: 17px 0 0 3px;
  padding: 0 0 0 4px;
  border: 1px solid #bbb;
  border-top: 2px solid #b2b2b2;
  display: flex;
  align-items: center;
}
.filter .caret { margin: 8px 0 0 2px; }
.tree { list-style: none; margin: 2px 0 0; padding: 0; width: 285px; overflow: hidden; font-size: 16.900px; height: 448px; }
.tree li { height: 32px; display: flex; align-items: center; padding: 2px 0 0 32px; }
.tree li.root { padding-left: 4px; font-size: 17.100px; letter-spacing: .080px; }
.tree li.loose { letter-spacing: .350px; }
.tree li.snug { letter-spacing: .250px; }
.tree li.tight { letter-spacing: .200px; }
.root svg { margin-right: 6px; margin-top: -4px; }
.ti { width: 40px; flex: none; display: flex; justify-content: center; padding-right: 1px; margin-top: -4px; }
.tree li.exp::before {
  content: "";
  margin: -6px 13px 0 -19px;
  border: 6px solid transparent;
  border-left-color: #555;
  border-right: 0;
}
.rollback { width: 285px; height: 3px; background: #2c7bb5; border-bottom: 1px solid #20208c; margin-top: -1px; }
.hscroll { height: 25px; width: 285px; margin: auto 0 1px; padding: 0 6px; background: #f0f0f0; display: flex; align-items: center; }
.thumb { width: 131px; height: 24px; background: #cdcdcd; margin-left: 9px; }
.hscroll .r { margin-left: auto; }

/* graphics area */
.viewport {
  position: relative;
  width: 1371px;
  background:
    radial-gradient(ellipse 950px 560px at 0 0, #fff 30%, rgba(255,255,255,.75) 60%, rgba(255,255,255,0)),
    radial-gradient(ellipse 500px 420px at 100% 0, rgba(255,255,255,.45), rgba(255,255,255,0)),
    linear-gradient(#e4e7ef 0, #dfe2ec 45%, #e0e3ed 53%, #eef0f5 60%, #fafbfc 69%, #fff 76%, #fdfdfe 90%, #fafbfd);
}
.headsup { position: absolute; left: 454px; top: 3px; height: 36px; display: flex; align-items: center; opacity: .85; }
.headsup span { width: 39px; display: flex; justify-content: center; }
.headsup .caret { margin: 0 2px 0 3px; border-top-color: #888; }
.headsup .push { margin-left: 3px; }
.doc-ctl { position: absolute; left: 1180px; top: 9px; display: flex; align-items: center; color: #979797; }
.doc-ctl svg { margin-right: 21px; }
.doc-ctl .min { margin: 17px 21px 0 0; }
.taskpane { position: absolute; right: 0; top: 59px; width: 40px; border: solid #808080; border-width: 1px 0 0 1px; }
.taskpane span { height: 36px; background: #d3d3d3; border-bottom: 1px solid #808080; display: flex; align-items: center; justify-content: center; padding: 0 2px 1px 0; }
.taskpane .on { background: #fafafa; }
.splitter { position: absolute; left: -5px; top: 440px; width: 13px; height: 39px; background: #f7f7f7; border: 1px solid #888; border-left: 0; display: flex; align-items: center; justify-content: center; }
.splitter i { margin-left: 4px; }

/* sheet tabs */
.sheets { height: 25px; border-top: 1px solid #808080; display: flex; color: #000; font-size: 17px; }
.nav { width: 101px; padding-left: 2px; display: flex; background: linear-gradient(#000, #000) 0 0 / 98px 1px no-repeat, #e6e6e6; border-right: 1px solid #808080; margin-top: -1px; }
.nav i { width: 23px; height: 24px; margin: 1px 1px 0 0; background: #a6a6ba; border: 1px solid #8787a1; color: #75758e; display: flex; align-items: center; justify-content: center; }
.nav svg { width: 11px; height: 13px; }
.sheet { height: 22px; padding-top: 3px; background: #d3d3d3; border: solid #808080; border-width: 0 1px 1px 0; text-align: center; }
.sheet.on { width: 87px; height: 23px; background: #fafafa; font-weight: 700; font-size: 17.500px; margin-top: -1px; padding-top: 4px; }
.views { width: 102px; font-size: 17.500px; padding-right: 2px; }
.motion { width: 168px; padding-right: 8px; font-size: 17.400px; letter-spacing: .2px; }

/* command manager */
.vtabs { width: 35px; display: flex; flex-direction: column; color: #111; margin-left: -1px; }
.vt { background: #d3d3d3; border: 1px solid #808080; border-top: 0; display: flex; align-items: flex-end; justify-content: center; padding: 0 0 2px 6px; flex: none; }
.vt span { writing-mode: vertical-rl; transform: rotate(180deg); }
.assembly { height: 94px; letter-spacing: .150px; }
.layout { height: 72px; }
.sketch { height: 71px; }
.evaluate { height: 88px; }
.render { height: 133px; background: #f9f9f9; border-right-color: transparent; font-weight: 700; color: #333; font-size: 17.200px; letter-spacing: .150px; }
.addins { height: 202px; letter-spacing: .550px; }
.sim { height: 106px; font-size: 16.500px; letter-spacing: .1px; }
.mbd { height: 177px; letter-spacing: .450px; }
.commands { width: 227px; padding-top: 7px; }
.cmd { height: 39px; padding-left: 9px; display: flex; align-items: center; font-size: 16.400px; }
.cmd svg { width: 30px; height: 30px; margin-right: 9px; }
.cmd.off { color: #b4b4b4; }
.commands hr { height: 1px; border: 0; background: #c4c4c4; margin: 3px 0 2px 7px; }

/* status bar */
.status { height: 27px; flex: none; display: flex; align-items: center; padding: 5px 0 0 1px; border-top: 1px solid #808080; border-image: linear-gradient(90deg, #808080 1659px, transparent 1659px) 1; font-size: 17.300px; }
.edition { width: 1393px; }
.cell { height: 24px; margin-top: -3px; padding-top: 5px; border-right: 1px solid #ccc; }
.defined { width: 122px; font-size: 16.800px; }
.gap { width: 9px; }
.editing { width: 147px; padding-left: 2px; font-size: 17.400px; }
.gap2 { width: 16px; }
.units { margin-left: 37px; width: 78px; }
.up { border: 3px solid transparent; border-bottom: 4px solid #444; border-top: 0; margin-top: -4px; }
.tag { margin: -11px 0 0 90px; }

/* taskbar */
.taskbar { height: 57px; flex: none; display: flex; position: relative; background: #001f45; color: #fff; }
.start { width: 72px; display: flex; align-items: center; justify-content: center; padding-top: 3px; }
.cortana { width: 516px; background: #334f6e; display: flex; align-items: center; padding: 3px 22px 0 13px; color: #a9b5c4; font-size: 19.600px; }
.cortana span { margin-left: 13px; padding-top: 3px; }
.mic { margin-left: auto; }
.apps { display: flex; margin-left: -2px; }
.apps span { width: 75.500px; display: flex; align-items: center; justify-content: center; padding-top: 2px; }
.apps .explorer { padding-left: 3px; }
.apps .active { width: 73px; background: linear-gradient(90deg, #1a4b8c 67px, #103a6d 67px, #103a6d 68px, #22508c 68px); padding-right: 4px; }
.ps { font: 700 17px "Open Sans", sans-serif; fill: #8cc3ff; }
.sw { font: 900 17px Lato, sans-serif; fill: #fff; }
.yr { font: 900 9.500px Lato, sans-serif; fill: #fff; stroke: #222; stroke-width: 1.500px; paint-order: stroke; }
.tds { color: #fff; }
.wall { width: 732px; position: absolute; right: 0; top: 0; }
.tray { position: relative; display: flex; align-items: center; margin-left: auto; padding-top: 2px; border-right: 1px solid #56708c; margin-right: 6px; width: 527px; }
.tray svg { position: relative; }
.t1 { margin-right: 27px; }
.t2 { margin-right: 24px; }
.t3 { margin-right: 27px; }
.t4 { margin-right: 26px; }
.t5 { margin-right: 28px; }
.t6 { margin-right: 23px; }
.lang { font-size: 16.800px; width: 52px; padding-top: 2px; }
.clock { display: flex; flex-direction: column; align-items: center; gap: 12px; font-size: 17.500px; width: 94px; padding-top: 1px; }
.note { margin: 2px 0 0 28px; }
.badge { font: 700 17px "Open Sans", sans-serif; fill: #fff; }
.anno { font: 700 24px "Liberation Serif", serif; fill: #2e86b4; stroke: #134c69; stroke-width: .6px; }
```
